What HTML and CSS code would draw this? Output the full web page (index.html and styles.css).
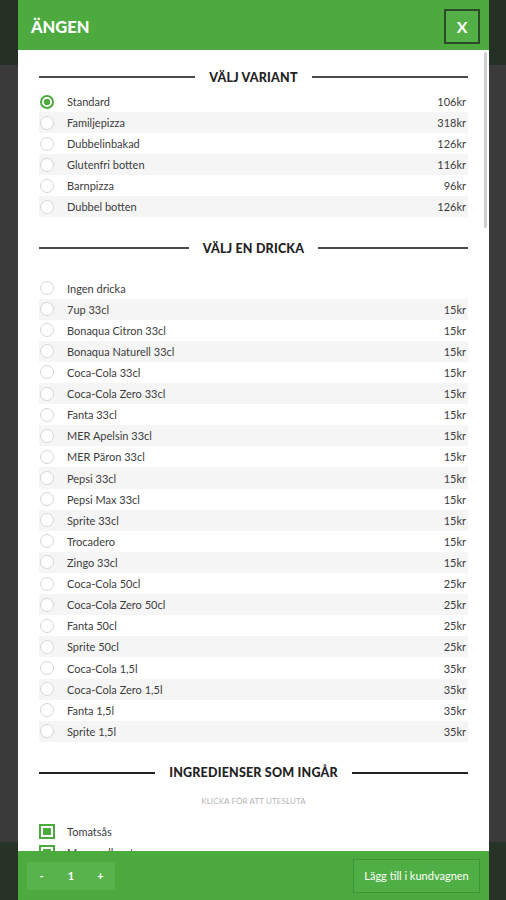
FILE: index.html
```html
<!DOCTYPE html>
<html lang="sv">
<head>
<meta charset="utf-8">
<title>Ängen</title>
<link rel="stylesheet" href="styles.css">
</head>
<body>
<div class="page">
  <div class="page-top"></div>
  <div class="page-mid"></div>
  <div class="page-bottom"></div>
</div>

<div class="modal">
  <header class="modal-header">
    <h1 class="modal-title">ÄNGEN</h1>
    <button class="close-btn">X</button>
  </header>

  <div class="modal-body">
    <h2 class="section-heading"><span>VÄLJ VARIANT</span></h2>
    <ul class="options variants">
      <li class="option"><span class="radio checked"></span><span class="label">Standard</span><span class="price">106kr</span></li>
      <li class="option"><span class="radio"></span><span class="label">Familjepizza</span><span class="price">318kr</span></li>
      <li class="option"><span class="radio"></span><span class="label">Dubbelinbakad</span><span class="price">126kr</span></li>
      <li class="option"><span class="radio"></span><span class="label">Glutenfri botten</span><span class="price">116kr</span></li>
      <li class="option"><span class="radio"></span><span class="label">Barnpizza</span><span class="price">96kr</span></li>
      <li class="option"><span class="radio"></span><span class="label">Dubbel botten</span><span class="price">126kr</span></li>
    </ul>

    <h2 class="section-heading heading-drinks"><span>VÄLJ EN DRICKA</span></h2>
    <ul class="options drinks">
      <li class="option"><span class="radio"></span><span class="label">Ingen dricka</span><span class="price"></span></li>
      <li class="option"><span class="radio"></span><span class="label">7up 33cl</span><span class="price">15kr</span></li>
      <li class="option"><span class="radio"></span><span class="label">Bonaqua Citron 33cl</span><span class="price">15kr</span></li>
      <li class="option"><span class="radio"></span><span class="label">Bonaqua Naturell 33cl</span><span class="price">15kr</span></li>
      <li class="option"><span class="radio"></span><span class="label">Coca-Cola 33cl</span><span class="price">15kr</span></li>
      <li class="option"><span class="radio"></span><span class="label">Coca-Cola Zero 33cl</span><span class="price">15kr</span></li>
      <li class="option"><span class="radio"></span><span class="label">Fanta 33cl</span><span class="price">15kr</span></li>
      <li class="option"><span class="radio"></span><span class="label">MER Apelsin 33cl</span><span class="price">15kr</span></li>
      <li class="option"><span class="radio"></span><span class="label">MER Päron 33cl</span><span class="price">15kr</span></li>
      <li class="option"><span class="radio"></span><span class="label">Pepsi 33cl</span><span class="price">15kr</span></li>
      <li class="option"><span class="radio"></span><span class="label">Pepsi Max 33cl</span><span class="price">15kr</span></li>
      <li class="option"><span class="radio"></span><span class="label">Sprite 33cl</span><span class="price">15kr</span></li>
      <li class="option"><span class="radio"></span><span class="label">Trocadero</span><span class="price">15kr</span></li>
      <li class="option"><span class="radio"></span><span class="label">Zingo 33cl</span><span class="price">15kr</span></li>
      <li class="option"><span class="radio"></span><span class="label">Coca-Cola 50cl</span><span class="price">25kr</span></li>
      <li class="option"><span class="radio"></span><span class="label">Coca-Cola Zero 50cl</span><span class="price">25kr</span></li>
      <li class="option"><span class="radio"></span><span class="label">Fanta 50cl</span><span class="price">25kr</span></li>
      <li class="option"><span class="radio"></span><span class="label">Sprite 50cl</span><span class="price">25kr</span></li>
      <li class="option"><span class="radio"></span><span class="label">Coca-Cola 1,5l</span><span class="price">35kr</span></li>
      <li class="option"><span class="radio"></span><span class="label">Coca-Cola Zero 1,5l</span><span class="price">35kr</span></li>
      <li class="option"><span class="radio"></span><span class="label">Fanta 1,5l</span><span class="price">35kr</span></li>
      <li class="option"><span class="radio"></span><span class="label">Sprite 1,5l</span><span class="price">35kr</span></li>
    </ul>

    <h2 class="section-heading heading-ingredients"><span>INGREDIENSER SOM INGÅR</span></h2>
    <p class="hint">KLICKA FÖR ATT UTESLUTA</p>
    <ul class="options ingredients">
      <li class="option"><span class="checkbox"></span><span class="label">Tomatsås</span></li>
      <li class="option"><span class="checkbox"></span><span class="label">Mozzarellaost</span></li>
    </ul>
  </div>

  <div class="scroll-thumb"></div>

  <footer class="modal-footer">
    <div class="qty">
      <button class="qty-btn">-</button>
      <span class="qty-value">1</span>
      <button class="qty-btn">+</button>
    </div>
    <button class="add-btn">Lägg till i kundvagnen</button>
  </footer>
</div>
</body>
</html>
```

FILE: styles.css
```css
* { box-sizing: border-box; }

html, body {
  margin: 0;
  padding: 0;
  height: 100%;
}

body {
  font-family: Lato, "Open Sans", "Liberation Sans", sans-serif;
  background: #3a3a3a;
  overflow: hidden;
}

.page {
  display: flex;
  flex-direction: column;
  height: 900px;
}

.page-top {
  height: 65px;
  background: #263126;
}

.page-mid {
  flex: 1;
  background: #3a3a3a;
}

.page-bottom {
  height: 58px;
  background: #283328;
}

.modal {
  position: fixed;
  top: 0;
  left: 18px;
  width: 471px;
  height: 900px;
  display: flex;
  flex-direction: column;
  background: #fff;
}

.modal-header {
  height: 50px;
  flex: none;
  background: #4caa3f;
  display: flex;
  align-items: center;
  justify-content: space-between;
  padding: 0 9px 0 13px;
}

.modal-title {
  margin: 0;
  color: #fff;
  font-size: 16.5px;
  font-weight: 900;
  padding-top: 3px;
}

.close-btn {
  width: 36px;
  height: 35px;
  margin-top: 3px;
  background: #52b046;
  border: 2px solid #2c4a2a;
  color: #fff;
  font-family: inherit;
  font-weight: 700;
  font-size: 16px;
  padding: 0;
}

.modal-body {
  flex: 1;
  overflow: hidden;
  padding: 17px 21px 0;
}

.section-heading {
  margin: 0;
  height: 20px;
  display: flex;
  align-items: center;
  gap: 14px;
  font-size: 12.5px;
  font-weight: 900;
  color: #222;
  letter-spacing: 0.2px;
}

.section-heading::before,
.section-heading::after {
  content: "";
  flex: 1;
  height: 2px;
  background: #4a4a4a;
}

.heading-drinks {
  margin-top: 21px;
}

.heading-ingredients {
  margin-top: 21px;
}

.heading-ingredients::before,
.heading-ingredients::after {
  background: #222;
}

.options {
  list-style: none;
  margin: 0;
  padding: 0;
}

.variants {
  margin-top: 4px;
}

.drinks {
  margin-top: 19.5px;
}

.option {
  display: flex;
  align-items: center;
  height: 21px;
  padding: 0 2px 0 1px;
  font-size: 11px;
  color: #3c3c3c;
}

.drinks .option {
  height: 21.12px;
}

.option:nth-child(even) {
  background: #f5f5f5;
}

.radio {
  width: 14px;
  height: 14px;
  border-radius: 50%;
  border: 1px solid #d6d6d6;
  background: #fff;
  flex: none;
}

.radio.checked {
  border: 2px solid #4caa3f;
  background: radial-gradient(circle, #4caa3f 0 3px, #fff 3.6px);
}

.label {
  margin-left: 13px;
}

.price {
  margin-left: auto;
}

.hint {
  margin: 13px 0 0;
  height: 11px;
  line-height: 11px;
  text-align: center;
  font-size: 8px;
  color: #b5b5b5;
  letter-spacing: 0.1px;
}

.ingredients {
  margin-top: 14px;
}

.ingredients .option {
  padding-left: 0;
}

.ingredients .option:nth-child(even) {
  background: #fff;
}

.checkbox {
  width: 16px;
  height: 15px;
  border: 2px solid #4caa3f;
  background: #fff;
  flex: none;
  padding: 2px;
  display: flex;
}

.checkbox::after {
  content: "";
  flex: 1;
  background: #4caa3f;
}

.ingredients .label {
  margin-left: 12px;
}

.scroll-thumb {
  position: absolute;
  right: 2px;
  top: 52px;
  width: 3px;
  height: 176px;
  background: #cfcfcf;
  border-radius: 2px;
}

.modal-footer {
  height: 49px;
  flex: none;
  background: #4caa3f;
  display: flex;
  align-items: center;
  justify-content: space-between;
  padding: 0 9px;
}

.qty {
  display: flex;
  align-items: center;
  width: 88px;
  height: 28px;
  background: #58b34c;
}

.qty-btn,
.qty-value {
  flex: 1;
  text-align: center;
  color: #fff;
  font-family: inherit;
  font-size: 11px;
  font-weight: 700;
}

.qty-btn {
  background: none;
  border: 0;
  padding: 0;
  height: 100%;
}

.add-btn {
  height: 34px;
  width: 127px;
  background: #4faf44;
  border: 1px solid #3e9535;
  color: #fff;
  font-family: inherit;
  font-size: 11px;
  padding: 0;
}
```
